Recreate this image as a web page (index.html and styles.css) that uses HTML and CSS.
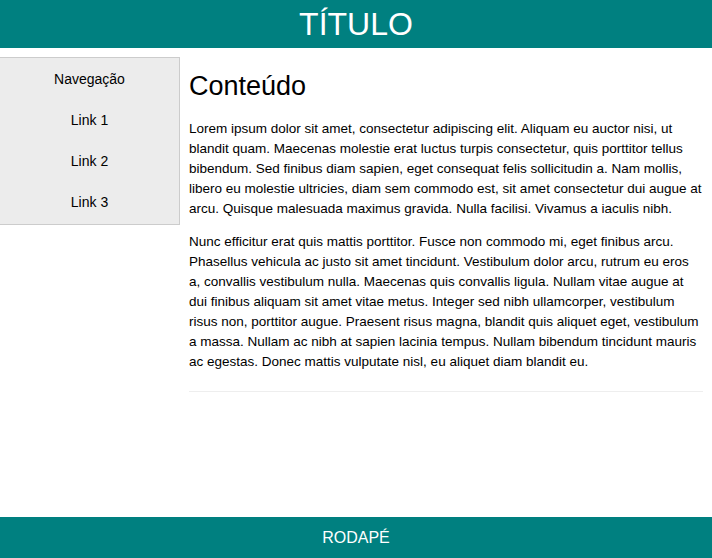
FILE: index.html
```html
<!DOCTYPE html>
<html lang="pt">
<head>
<meta charset="utf-8">
<title>Título</title>
<link rel="stylesheet" href="styles.css">
</head>
<body>
<div class="page">
  <header class="top">TÍTULO</header>
  <div class="main">
    <nav class="nav">
      <div class="nav-item">Navegação</div>
      <div class="nav-item">Link 1</div>
      <div class="nav-item">Link 2</div>
      <div class="nav-item">Link 3</div>
    </nav>
    <section class="content">
      <h2 class="heading">Conteúdo</h2>
      <p class="para">Lorem ipsum dolor sit amet, consectetur adipiscing elit. Aliquam eu auctor nisi, ut blandit quam. Maecenas molestie erat luctus turpis consectetur, quis porttitor tellus bibendum. Sed finibus diam sapien, eget consequat felis sollicitudin a. Nam mollis, libero eu molestie ultricies, diam sem commodo est, sit amet consectetur dui augue at arcu. Quisque malesuada maximus gravida. Nulla facilisi. Vivamus a iaculis nibh.</p>
      <p class="para">Nunc efficitur erat quis mattis porttitor. Fusce non commodo mi, eget finibus arcu. Phasellus vehicula ac justo sit amet tincidunt. Vestibulum dolor arcu, rutrum eu eros a, convallis vestibulum nulla. Maecenas quis convallis ligula. Nullam vitae augue at dui finibus aliquam sit amet vitae metus. Integer sed nibh ullamcorper, vestibulum risus non, porttitor augue. Praesent risus magna, blandit quis aliquet eget, vestibulum a massa. Nullam ac nibh at sapien lacinia tempus. Nullam bibendum tincidunt mauris ac egestas. Donec mattis vulputate nisl, eu aliquet diam blandit eu.</p>
      <div class="rule"></div>
    </section>
  </div>
  <footer class="bottom">RODAPÉ</footer>
</div>
</body>
</html>
```

FILE: styles.css
```css
html, body {
  margin: 0;
  padding: 0;
}
body {
  font-family: "Liberation Sans", Arial, sans-serif;
  color: #000;
  background: #fff;
}
.page {
  min-height: 100vh;
  display: flex;
  flex-direction: column;
}
.top {
  background: #008080;
  color: #fff;
  height: 48px;
  line-height: 48px;
  text-align: center;
  font-size: 32px;
}
.main {
  flex: 1;
  display: flex;
  align-items: flex-start;
  padding-top: 9px;
}
.nav {
  width: 179px;
  flex: none;
  background: #ececec;
  border: 1px solid #cccccc;
  border-left: none;
  padding: 1px 0 1px;
  font-size: 14px;
}
.nav-item {
  height: 41px;
  line-height: 40px;
  text-align: center;
}
.content {
  flex: 1;
  padding: 0 9px 0 9px;
}
.heading {
  margin: 9px 0 0;
  font-size: 27px;
  font-weight: normal;
  line-height: 40px;
}
.para {
  margin: 13px 0 0;
  font-size: 13.5px;
  line-height: 20px;
}
.rule {
  margin-top: 19px;
  border-top: 1px solid #eeeeee;
}
.bottom {
  background: #008080;
  color: #fff;
  height: 41px;
  line-height: 42px;
  text-align: center;
  font-size: 16px;
}
```
